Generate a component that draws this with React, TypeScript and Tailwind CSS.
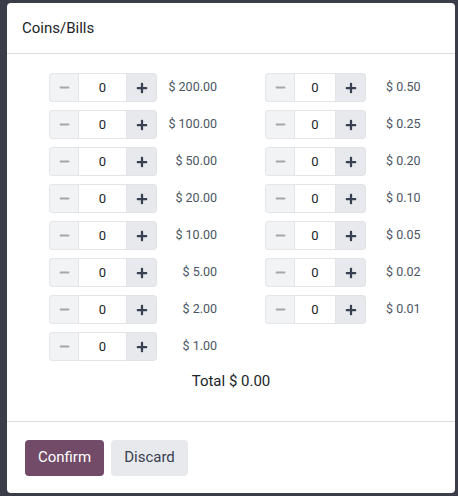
import { FaMinus, FaPlus } from "react-icons/fa";

const bills = ["200.00", "100.00", "50.00", "20.00", "10.00", "5.00", "2.00", "1.00"];
const coins = ["0.50", "0.25", "0.20", "0.10", "0.05", "0.02", "0.01"];

const Stepper = ({ wide }: { wide: boolean }) => (
  <div className={`flex h-[29px] shrink-0 ${wide ? "w-[108px]" : "w-[101px]"}`}>
    <button className="flex w-[29px] shrink-0 items-center justify-center rounded-l-[4px] border border-r-0 border-[#e4e6ea] bg-[#f2f3f5] text-[#a3a7ad]">
      <FaMinus size={11} />
    </button>
    <input
      readOnly
      value="0"
      className="min-w-0 flex-1 border border-[#e2e4e8] bg-white text-center text-[13px] text-[#212529] outline-none"
    />
    <button className="flex w-[30px] shrink-0 items-center justify-center rounded-r-[4px] border border-l-0 border-[#e0e2e6] bg-[#e7e9ed] text-[#374151]">
      <FaPlus size={12} />
    </button>
  </div>
);

export default function App() {
  return (
    <div className="h-[496px] w-[458px] overflow-hidden bg-[#3b3e48] pl-[7px] pt-[3px] font-['Roboto',sans-serif]">
      <div className="flex h-[490px] w-[448px] flex-col rounded-[4px] bg-white">
        <div className="flex h-[51px] items-center border-b border-[#dcdee2] pl-[15px]">
          <h4 className="text-[15px] text-[#212529]">Coins/Bills</h4>
        </div>

        <div className="flex flex-1 flex-col pt-[19px]">
          <div className="flex pl-[42px]">
            <div className="flex flex-col gap-[8px]">
              {bills.map((b) => (
                <div key={b} className="flex items-center">
                  <Stepper wide />
                  <span className="w-[60px] text-right text-[12.5px] text-[#4b5563]">$ {b}</span>
                </div>
              ))}
            </div>
            <div className="ml-[48px] flex flex-col gap-[8px]">
              {coins.map((c) => (
                <div key={c} className="flex items-center">
                  <Stepper wide={false} />
                  <span className="ml-[20px] text-[12.5px] text-[#4b5563]">$ {c}</span>
                </div>
              ))}
            </div>
          </div>
          <div className="mt-[9px] text-center text-[15px] leading-[22px] text-[#212529]">Total $ 0.00</div>
        </div>

        <div className="flex h-[72px] items-center gap-[7px] border-t border-[#dcdee2] pl-[18px]">
          <button className="h-[36px] w-[79px] rounded-[4px] bg-[#714b67] text-[15px] text-white">Confirm</button>
          <button className="h-[36px] w-[77px] rounded-[4px] bg-[#e7e9ed] text-[15px] text-[#374151]">Discard</button>
        </div>
      </div>
    </div>
  );
}
